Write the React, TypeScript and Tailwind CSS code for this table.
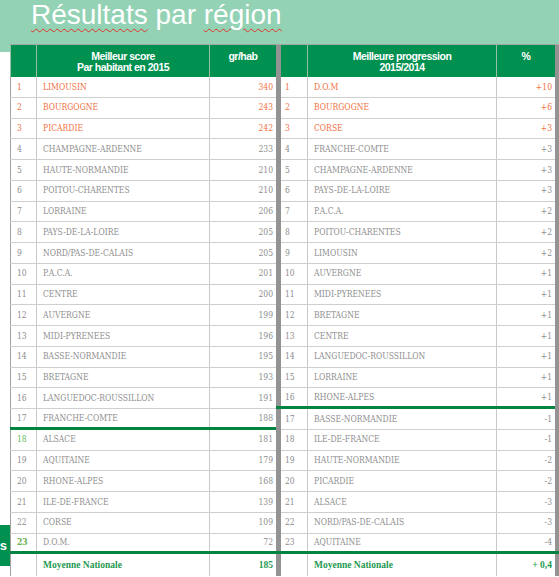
const scores: [number, string, string][] = [
  [1, 'LIMOUSIN', '340'],
  [2, 'BOURGOGNE', '243'],
  [3, 'PICARDIE', '242'],
  [4, 'CHAMPAGNE-ARDENNE', '233'],
  [5, 'HAUTE-NORMANDIE', '210'],
  [6, 'POITOU-CHARENTES', '210'],
  [7, 'LORRAINE', '206'],
  [8, 'PAYS-DE-LA-LOIRE', '205'],
  [9, 'NORD/PAS-DE-CALAIS', '205'],
  [10, 'P.A.C.A.', '201'],
  [11, 'CENTRE', '200'],
  [12, 'AUVERGNE', '199'],
  [13, 'MIDI-PYRENEES', '196'],
  [14, 'BASSE-NORMANDIE', '195'],
  [15, 'BRETAGNE', '193'],
  [16, 'LANGUEDOC-ROUSSILLON', '191'],
  [17, 'FRANCHE-COMTE', '188'],
  [18, 'ALSACE', '181'],
  [19, 'AQUITAINE', '179'],
  [20, 'RHONE-ALPES', '168'],
  [21, 'ILE-DE-FRANCE', '139'],
  [22, 'CORSE', '109'],
  [23, 'D.O.M.', '72'],
]

const progress: [number, string, string][] = [
  [1, 'D.O.M', '+10'],
  [2, 'BOURGOGNE', '+6'],
  [3, 'CORSE', '+3'],
  [4, 'FRANCHE-COMTE', '+3'],
  [5, 'CHAMPAGNE-ARDENNE', '+3'],
  [6, 'PAYS-DE-LA-LOIRE', '+3'],
  [7, 'P.A.C.A.', '+2'],
  [8, 'POITOU-CHARENTES', '+2'],
  [9, 'LIMOUSIN', '+2'],
  [10, 'AUVERGNE', '+1'],
  [11, 'MIDI-PYRENEES', '+1'],
  [12, 'BRETAGNE', '+1'],
  [13, 'CENTRE', '+1'],
  [14, 'LANGUEDOC-ROUSSILLON', '+1'],
  [15, 'LORRAINE', '+1'],
  [16, 'RHONE-ALPES', '+1'],
  [17, 'BASSE-NORMANDIE', '-1'],
  [18, 'ILE-DE-FRANCE', '-1'],
  [19, 'HAUTE-NORMANDIE', '-2'],
  [20, 'PICARDIE', '-2'],
  [21, 'ALSACE', '-3'],
  [22, 'NORD/PAS-DE-CALAIS', '-3'],
  [23, 'AQUITAINE', '-4'],
]

const serif = "font-['DejaVu_Serif','Liberation_Serif',serif] font-stretch-condensed"
const narrow = "font-['Liberation_Sans',Arial,sans-serif] tracking-[-0.5px]"

function textColor(rank: number) {
  return rank <= 3 ? 'text-[#f2713f]' : 'text-[#8e8e8e]'
}

function rankColor(rank: number, left: boolean) {
  if (left && rank === 18) return 'text-[#5fb85a]'
  if (left && rank === 23) return 'text-[#5fb04a] font-bold'
  return textColor(rank)
}

export default function App() {
  return (
    <div className="relative w-[559px] h-[577px] overflow-hidden bg-white">
      <div className="h-[52px] bg-[#93d2b4] pl-[31px] pt-[1px]">
        <h1 className="font-['Liberation_Sans',Arial,sans-serif] text-[28px] leading-[28px] text-white">
          <span className="underline decoration-wavy decoration-[#e0322b] decoration-1 underline-offset-[4px]">
            Résultats
          </span>{' '}
          par{' '}
          <span className="underline decoration-wavy decoration-[#e0322b] decoration-1 underline-offset-[4px]">
            région
          </span>
        </h1>
      </div>

      <div className="-mt-[8px] ml-[10px] w-[549px]">
        {/* header */}
        <div className={`flex h-[33px] border-t border-[#a5a5a5] text-white font-bold text-[10.5px] leading-[11px] ${narrow}`}>
          <div className="w-[27px] bg-[#00904f] border-l border-r border-[#9bbfab]" />
          <div className="w-[173px] bg-[#00904f] border-r border-[#9bbfab] pt-[6px] text-center">
            Meilleur score
            <br />
            Par habitant en 2015
          </div>
          <div className="w-[66px] bg-[#00904f] pt-[6px] text-center">gr/hab</div>
          <div className="w-[5px] bg-[#939393]" />
          <div className="w-[27px] bg-[#00904f] border-r border-[#9bbfab]" />
          <div className="w-[189px] bg-[#00904f] border-r border-[#9bbfab] pt-[6px] text-center">
            Meilleure progression
            <br />
            2015/2014
          </div>
          <div className="w-[58px] bg-[#00904f] pt-[6px] text-center">%</div>
          <div className="w-[4px] bg-[#939393]" />
        </div>

        {/* rows */}
        {scores.map((s, i) => {
          const p = progress[i]
          const leftLine = s[0] === 17
          const rightLine = p[0] === 16
          const last = i === scores.length - 1
          const lb = last || leftLine ? 'border-b-[3px] border-b-[#00843f]' : 'border-b border-b-[#cfcfcf]'
          const rb = last || rightLine ? 'border-b-[3px] border-b-[#00843f]' : 'border-b border-b-[#cfcfcf]'
          const bar = last || rightLine ? 'border-b-[3px] border-b-[#00843f]' : ''
          return (
            <div key={s[0]} className={`flex h-[20.75px] text-[8.5px] ${serif}`}>
              <div className={`flex ${lb}`}>
                <div className={`w-[27px] flex items-center pl-[6px] border-l border-l-[#a0a0a0] border-r border-r-[#c8c8c8] ${rankColor(s[0], true)}`}>
                  {s[0]}
                </div>
                <div className={`w-[173px] flex items-center pl-[6px] border-r border-r-[#c8c8c8] ${textColor(s[0])}`}>
                  {s[1]}
                </div>
                <div className={`w-[66px] flex items-center justify-end pr-[3px] ${textColor(s[0])}`}>
                  {s[2]}
                </div>
              </div>
              <div className={`w-[5px] bg-[#939393] ${bar}`} />
              <div className={`flex ${rb}`}>
                <div className={`w-[27px] flex items-center pl-[4px] border-r border-r-[#c8c8c8] ${textColor(p[0])}`}>
                  {p[0]}
                </div>
                <div className={`w-[189px] flex items-center pl-[6px] border-r border-r-[#c8c8c8] ${textColor(p[0])}`}>
                  {p[1]}
                </div>
                <div className={`w-[58px] flex items-center justify-end pr-[3px] ${textColor(p[0])}`}>
                  {p[2]}
                </div>
              </div>
              <div className={`w-[4px] bg-[#939393] ${last ? 'border-b-[3px] border-b-[#00843f]' : ''}`} />
            </div>
          )
        })}

        {/* national average */}
        <div className="flex h-[22px] text-[9.5px] font-bold text-[#1f9a52] font-['Liberation_Serif',serif]">
          <div className="w-[27px] border-l border-l-[#a0a0a0] border-r border-r-[#c8c8c8]" />
          <div className="w-[173px] flex items-center pl-[6px] border-r border-r-[#c8c8c8]">Moyenne Nationale</div>
          <div className="w-[66px] flex items-center justify-end pr-[3px]">185</div>
          <div className="w-[5px] bg-[#939393]" />
          <div className="w-[27px] border-r border-r-[#c8c8c8]" />
          <div className="w-[189px] flex items-center pl-[6px] border-r border-r-[#c8c8c8]">Moyenne Nationale</div>
          <div className="w-[58px] flex items-center justify-end pr-[3px]">+ 0,4</div>
          <div className="w-[4px] bg-[#939393]" />
        </div>
      </div>

      <div className="absolute left-0 top-[525px] w-[10px] h-[41px] bg-[#00904f] flex items-center justify-end pr-[3px] overflow-hidden">
        <span className="font-['Liberation_Sans',Arial,sans-serif] font-bold text-[13px] text-white leading-none">s</span>
      </div>
    </div>
  )
}
